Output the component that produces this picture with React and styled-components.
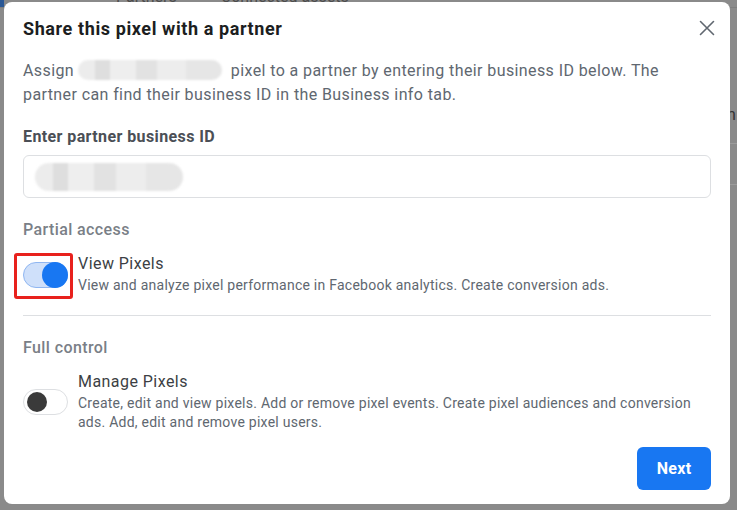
import React from 'react';
import styled, { createGlobalStyle } from 'styled-components';

const GlobalStyle = createGlobalStyle`
  html, body {
    margin: 0;
    padding: 0;
    background: #8a8a8a;
  }
  body {
    font-family: Roboto, 'Liberation Sans', Arial, sans-serif;
    -webkit-font-smoothing: antialiased;
  }
`;

const Screen = styled.div`
  position: relative;
  width: 737px;
  height: 510px;
  overflow: hidden;
  background: #8a8a8a;
`;

/* page behind the dim overlay */
const BackPage = styled.div`
  display: flex;
  flex-direction: column;
  height: 100%;
`;

const TabBar = styled.div`
  display: flex;
  gap: 44px;
  margin-top: -13px;
  padding-left: 116px;
  height: 20px;
  font-size: 16px;
  color: #4c4c4c;
  border-bottom: 1px solid #7e7e7e;
`;

const TabMark = styled.div`
  width: 4px;
  height: 7px;
  margin-top: -8px;
  background: #2a5896;
`;

const SideRows = styled.div`
  display: flex;
  flex-direction: column;
  align-items: flex-end;
  margin-top: 100px;
`;

const SideRow = styled.div`
  width: 12px;
  height: ${(p) => p.h}px;
  border-bottom: 1px solid #9b9b9b;
  font-size: 16px;
  line-height: 16px;
  color: #333;
  padding-left: 2px;
  box-sizing: border-box;
`;

const Modal = styled.div`
  position: absolute;
  left: 4px;
  top: 2px;
  width: 726px;
  height: 502px;
  box-sizing: border-box;
  background: #fff;
  border-radius: 8px;
  padding: 15px 19px 14px 19px;
  display: flex;
  flex-direction: column;
`;

const Header = styled.div`
  display: flex;
  align-items: center;
  justify-content: space-between;
  height: 24px;
`;

const Title = styled.h2`
  margin: 0;
  font-size: 18px;
  line-height: 24px;
  font-weight: 700;
  letter-spacing: 0.6px;
  color: #1c1e21;
`;

const CloseButton = styled.button`
  width: 24px;
  height: 24px;
  margin-right: -8px;
  margin-top: -2px;
  padding: 0;
  border: 0;
  background: none;
  display: flex;
  align-items: center;
  justify-content: center;
  cursor: pointer;
`;

const Intro = styled.p`
  margin: 18px 0 0;
  font-size: 16px;
  line-height: 24px;
  letter-spacing: 0.4px;
  color: #606770;
`;

const Redacted = styled.span`
  display: inline-block;
  vertical-align: middle;
  width: ${(p) => p.w}px;
  height: ${(p) => p.h}px;
  margin: ${(p) => p.m || '0'};
  border-radius: ${(p) => p.h / 2}px;
  background:
    linear-gradient(90deg, #ececec 0 12%, #dedede 12% 22%, #eeeeee 22% 40%, #e2e2e2 40% 55%, #ededed 55% 75%, #e6e6e6 75% 100%);
  filter: blur(1px);
`;

const FieldLabel = styled.div`
  margin-top: 20px;
  font-size: 16px;
  line-height: 20px;
  font-weight: 700;
  letter-spacing: 0.4px;
  color: #4b4f56;
`;

const InputBox = styled.div`
  margin-top: 8px;
  height: 43px;
  box-sizing: border-box;
  border: 1px solid #dddfe2;
  border-radius: 6px;
  display: flex;
  align-items: center;
  padding-left: 11px;
`;

const SectionLabel = styled.div`
  margin-top: ${(p) => p.mt}px;
  font-size: 16px;
  line-height: 20px;
  font-weight: 500;
  letter-spacing: 0.4px;
  color: #7a7f87;
`;

const OptionRow = styled.div`
  margin-top: 14px;
  display: flex;
  align-items: center;
  gap: 10px;
`;

const ToggleSpot = styled.div`
  position: relative;
  flex: none;
  display: flex;
`;

const Highlight = styled.div`
  position: absolute;
  left: -9px;
  right: -5px;
  top: -9px;
  bottom: -11px;
  border: 3px solid #e8211d;
  border-radius: 3px;
`;

const Track = styled.div`
  width: 45px;
  height: 26px;
  box-sizing: border-box;
  border-radius: 13px;
  border: 1px solid ${(p) => (p.on ? '#8fb6f1' : '#dddfe2')};
  background: ${(p) => (p.on ? '#cfe0fa' : '#fff')};
  display: flex;
  align-items: center;
  justify-content: ${(p) => (p.on ? 'flex-end' : 'flex-start')};
  padding: ${(p) => (p.on ? '0' : '0 3px')};
`;

const Knob = styled.div`
  width: ${(p) => (p.on ? 26 : 20)}px;
  height: ${(p) => (p.on ? 26 : 20)}px;
  margin-right: ${(p) => (p.on ? '-1px' : '0')};
  border-radius: 50%;
  background: ${(p) => (p.on ? '#1877f2' : '#3a3a3a')};
`;

const OptionText = styled.div`
  display: flex;
  flex-direction: column;
`;

const OptionTitle = styled.div`
  font-size: 16px;
  line-height: 20px;
  letter-spacing: 0.45px;
  color: #3c3f44;
`;

const OptionDesc = styled.div`
  margin-top: 2px;
  font-size: 14px;
  line-height: 19px;
  letter-spacing: 0.25px;
  color: #606770;
`;

const Divider = styled.hr`
  margin: 20px 0 0;
  border: 0;
  border-top: 1px solid #dddfe2;
`;

const Footer = styled.div`
  margin-top: auto;
  display: flex;
  justify-content: flex-end;
`;

const NextButton = styled.button`
  width: 74px;
  height: 43px;
  border: 0;
  border-radius: 6px;
  background: #1877f2;
  color: #fff;
  font-family: inherit;
  font-size: 16px;
  font-weight: 700;
  letter-spacing: 0.3px;
  cursor: pointer;
`;

const Toggle = ({ on, highlighted }) => (
  <ToggleSpot>
    <Track on={on}>
      <Knob on={on} />
    </Track>
    {highlighted && <Highlight />}
  </ToggleSpot>
);

const App = () => {
  return (
    <Screen>
      <GlobalStyle />
      <BackPage>
        <TabBar>
          <span>Partners</span>
          <span>Connected assets</span>
        </TabBar>
        <TabMark />
        <SideRows>
          <SideRow h={37}>n</SideRow>
          <SideRow h={41} />
        </SideRows>
      </BackPage>

      <Modal>
        <Header>
          <Title>Share this pixel with a partner</Title>
          <CloseButton aria-label="Close">
            <svg width="16" height="16" viewBox="0 0 16 16">
              <path d="M1.5 1.5l13 13M14.5 1.5l-13 13" stroke="#606770" strokeWidth="1.6" strokeLinecap="round" />
            </svg>
          </CloseButton>
        </Header>

        <Intro>
          Assign <Redacted w={144} h={20} m="-4px 4px 0 0" /> pixel to a partner by entering their business ID below. The
          partner can find their business ID in the Business info tab.
        </Intro>

        <FieldLabel>Enter partner business ID</FieldLabel>
        <InputBox>
          <Redacted w={148} h={28} />
        </InputBox>

        <SectionLabel mt={22}>Partial access</SectionLabel>
        <OptionRow>
          <Toggle on highlighted />
          <OptionText>
            <OptionTitle>View Pixels</OptionTitle>
            <OptionDesc>View and analyze pixel performance in Facebook analytics. Create conversion ads.</OptionDesc>
          </OptionText>
        </OptionRow>

        <Divider />

        <SectionLabel mt={22}>Full control</SectionLabel>
        <OptionRow>
          <Toggle />
          <OptionText>
            <OptionTitle>Manage Pixels</OptionTitle>
            <OptionDesc>
              Create, edit and view pixels. Add or remove pixel events. Create pixel audiences and conversion ads. Add,
              edit and remove pixel users.
            </OptionDesc>
          </OptionText>
        </OptionRow>

        <Footer>
          <NextButton>Next</NextButton>
        </Footer>
      </Modal>
    </Screen>
  );
};

export default App;
